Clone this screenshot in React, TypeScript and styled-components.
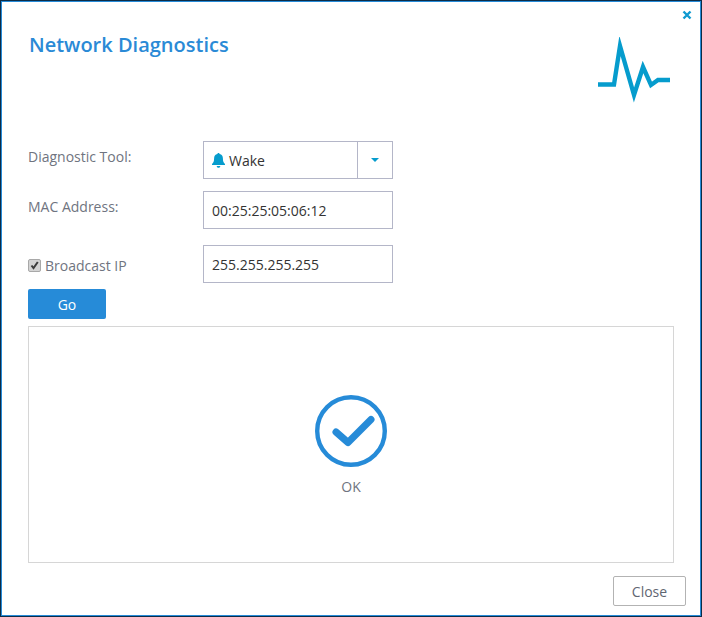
import React from "react";
import styled, { createGlobalStyle } from "styled-components";

const Global = createGlobalStyle`
  html, body { margin: 0; padding: 0; background: #fff; }
  * { box-sizing: border-box; }
`;

const Dialog = styled.div`
  width: 702px;
  height: 617px;
  border: 1px solid #0c2c47;
  box-shadow: inset 0 0 0 1px #268bd8;
  background: #fff;
  font-family: "Open Sans", sans-serif;
  font-size: 14px;
  color: #6b7280;
  display: flex;
  flex-direction: column;
  padding: 0 15px 10px 27px;
`;

const Header = styled.header`
  height: 140px;
  display: flex;
  justify-content: space-between;
  align-items: flex-start;
`;

const Title = styled.h1`
  margin: 30px 0 0 1px;
  font-size: 20px;
  line-height: 27px;
  font-weight: 600;
  color: #2a8ad6;
`;

const HeaderRight = styled.div`
  display: flex;
  flex-direction: column;
  align-items: flex-end;
  padding-top: 9px;
`;

const CloseIcon = styled.svg`
  display: block;
  margin-right: -6px;
`;

const PulseIcon = styled.svg`
  display: block;
  margin: 17px 16px 0 0;
`;

const Row = styled.div<{ $mb: number }>`
  display: flex;
  align-items: flex-start;
  height: 38px;
  margin-bottom: ${(p) => p.$mb}px;
`;

const Label = styled.label`
  width: 175px;
  padding: 6px 0 0 0;
  line-height: 19px;
  display: flex;
  align-items: center;
  color: #6f7480;
`;

const CheckLabel = styled(Label)`
  padding-top: 11px;
  gap: 4px;
`;

const CheckBox = styled.span`
  width: 13px;
  height: 13px;
  border: 1px solid #a8a8a8;
  border-radius: 2px;
  background: #d4d4d4;
  display: flex;
  align-items: center;
  justify-content: center;
`;

const Select = styled.div`
  width: 190px;
  height: 38px;
  border: 1px solid #b4b6c8;
  display: flex;
  color: #333;
`;

const SelectValue = styled.div`
  flex: 1;
  display: flex;
  align-items: center;
  gap: 4px;
  padding-left: 8px;
`;

const Caret = styled.div`
  width: 35px;
  border-left: 1px solid #b4b6c8;
  display: flex;
  align-items: center;
  justify-content: center;
`;

const Input = styled.input`
  width: 190px;
  height: 38px;
  border: 1px solid #b4b6c8;
  padding: 0 8px;
  font: inherit;
  color: #333;
  outline: none;
`;

const GoButton = styled.button`
  width: 78px;
  height: 30px;
  background: #268bd8;
  border: 0;
  border-radius: 2px;
  color: #fff;
  font: inherit;
  padding: 0;
  display: block;
`;

const Panel = styled.div`
  width: 646px;
  height: 237px;
  margin-top: 7px;
  border: 1px solid #d6d6d6;
  display: flex;
  flex-direction: column;
  align-items: center;
  padding-top: 68px;
`;

const OkText = styled.div`
  margin-top: 10px;
  line-height: 19px;
  color: #6f7480;
`;

const Footer = styled.footer`
  margin-top: 13px;
  display: flex;
  justify-content: flex-end;
`;

const CloseButton = styled.button`
  width: 73px;
  height: 30px;
  background: #fff;
  border: 1px solid #b3b3b3;
  border-radius: 2px;
  font: inherit;
  color: #5f6672;
  padding: 0;
`;

export default function App() {
  return (
    <Dialog>
      <Global />
      <Header>
        <Title>Network Diagnostics</Title>
        <HeaderRight>
          <CloseIcon width="10" height="10" viewBox="0 0 10 10">
            <path d="M1.5 1.5 L8.5 8.5 M8.5 1.5 L1.5 8.5" stroke="#0f9ad0" strokeWidth="2.4" fill="none" />
          </CloseIcon>
          <PulseIcon width="72" height="66" viewBox="0 0 72 66">
            <path
              d="M0 47.5 H16 L22 9 L36 58 L45 30 L53 48 L60 43 H72"
              stroke="#069ccd"
              strokeWidth="4.4"
              fill="none"
              strokeMiterlimit="10"
            />
          </PulseIcon>
        </HeaderRight>
      </Header>
      <Row $mb={12}>
        <Label>Diagnostic Tool:</Label>
        <Select>
          <SelectValue>
            <svg width="13" height="15" viewBox="0 0 13 15">
              <path
                d="M6.500 0c.7 0 1.100.4 1.100 1.100 2.200.4 3.300 2.100 3.300 4.300 0 2.900.8 4.400 2.100 5.500v1H0v-1c1.300-1.100 2.100-2.600 2.100-5.500 0-2.200 1.100-3.900 3.300-4.300C5.400.4 5.800 0 6.500 0zM4.700 12.900h3.600c0 1.100-.8 1.900-1.800 1.900s-1.800-.8-1.800-1.900z"
                fill="#069ccd"
              />
            </svg>
            Wake
          </SelectValue>
          <Caret>
            <svg width="8" height="4" viewBox="0 0 8 4">
              <path d="M0 0 H8 L4 4 Z" fill="#069ccd" />
            </svg>
          </Caret>
        </Select>
      </Row>
      <Row $mb={16}>
        <Label>MAC Address:</Label>
        <Input defaultValue="00:25:25:05:06:12" />
      </Row>
      <Row $mb={6}>
        <CheckLabel>
          <CheckBox>
            <svg width="11" height="11" viewBox="0 0 11 11">
              <path d="M2.500 5.500 L4.500 8 L8.800 2" fill="none" stroke="#3c3c3c" strokeWidth="2" />
            </svg>
          </CheckBox>
          Broadcast IP
        </CheckLabel>
        <Input defaultValue="255.255.255.255" />
      </Row>
      <GoButton>Go</GoButton>
      <Panel>
        <svg width="72" height="72" viewBox="0 0 72 72">
          <circle cx="36" cy="36" r="33.800" fill="none" stroke="#268bd8" strokeWidth="4.400" />
          <path d="M21 37 L33 47.500 L56 24.500" fill="none" stroke="#268bd8" strokeWidth="7" strokeLinecap="round" strokeLinejoin="round" />
        </svg>
        <OkText>OK</OkText>
      </Panel>
      <Footer>
        <CloseButton>Close</CloseButton>
      </Footer>
    </Dialog>
  );
}
